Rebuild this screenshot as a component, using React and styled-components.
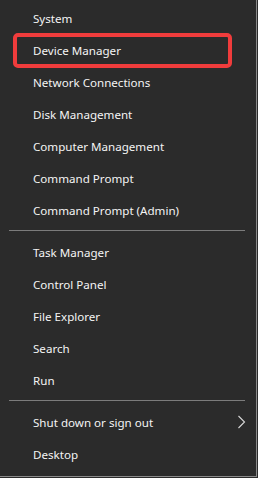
import React from 'react'
import styled, { createGlobalStyle } from 'styled-components'

const GlobalStyle = createGlobalStyle`
  html, body {
    margin: 0;
    padding: 0;
    background: #2b2b2b;
  }
`;

const groups = [
  ["System", "Device Manager", "Network Connections", "Disk Management", "Computer Management", "Command Prompt", "Command Prompt (Admin)"],
  ["Task Manager", "Control Panel", "File Explorer", "Search", "Run"],
  ["Shut down or sign out", "Desktop"],
];

export default function App() {
  return (
    <>
      <GlobalStyle />
      <StMenu>
        {groups.map((items, gi) => (
          <React.Fragment key={gi}>
            {gi > 0 && <StSeparator />}
            {items.map(label => (
              <StItem key={label} $marked={label === "Device Manager"}>
                {label}
                {label === "Shut down or sign out" && (
                  <StChevron width="9" height="14" viewBox="0 0 9 14">
                    <path d="M1.5 1 L7.5 7 L1.5 13" fill="none" stroke="#d8d8d8" strokeWidth="1.1" />
                  </StChevron>
                )}
              </StItem>
            ))}
          </React.Fragment>
        ))}
      </StMenu>
    </>
  )
}

const StMenu = styled.div`
  width: 257px;
  height: 477px;
  box-sizing: border-box;
  padding-top: 2px;
  background-color: #2b2b2b;
  border-right: 1px solid #8a8a8a;
  border-bottom: 1px solid #8a8a8a;
  display: flex;
  flex-direction: column;
`;
const StItem = styled.div`
  position: relative;
  height: 32px;
  display: flex;
  align-items: center;
  padding-left: 33px;
  font-family: "Noto Sans", "Open Sans", sans-serif;
  font-size: 11.6px;
  color: #f4f4f4;

  &::after {
    content: "";
    display: ${props => (props.$marked ? "block" : "none")};
    position: absolute;
    left: 13px;
    right: 24px;
    top: -1px;
    bottom: -2px;
    border: 4px solid #f03c3c;
    border-radius: 5px;
  }
`;
const StSeparator = styled.div`
  height: 10px;
  display: flex;
  align-items: flex-start;
  padding: 0 11px 0 9px;

  &::before {
    content: "";
    flex: 1;
    margin-top: 4px;
    height: 1px;
    background-color: #7c7c7c;
  }
`;
const StChevron = styled.svg`
  position: absolute;
  right: 10px;
  top: 9px;
`;
